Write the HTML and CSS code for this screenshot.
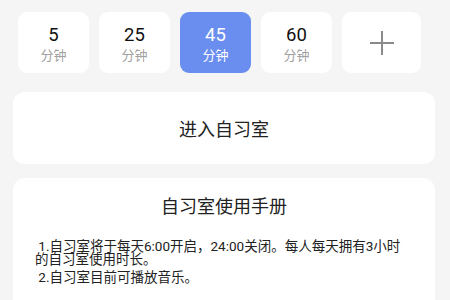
FILE: index.html
```html
<!DOCTYPE html>
<html lang="zh">
<head>
<meta charset="utf-8">
<link rel="stylesheet" href="styles.css">
</head>
<body>
<div class="page">
  <div class="times">
    <div class="time"><div class="num">5</div><div class="unit">分钟</div></div>
    <div class="time"><div class="num">25</div><div class="unit">分钟</div></div>
    <div class="time active"><div class="num">45</div><div class="unit">分钟</div></div>
    <div class="time"><div class="num">60</div><div class="unit">分钟</div></div>
    <div class="time add">
      <svg width="26" height="26" viewBox="0 0 26 26"><path d="M13 1V25M1 13H25" stroke="#8a8a8a" stroke-width="2"/></svg>
    </div>
  </div>
  <div class="card enter">进入自习室</div>
  <div class="card manual">
    <div class="title">自习室使用手册</div>
    <p class="para">&nbsp;1.自习室将于每天6:00开启，24:00关闭。每人每天拥有3小时的自习室使用时长。</p>
    <p class="para">&nbsp;2.自习室目前可播放音乐。</p>
  </div>
</div>
</body>
</html>
```
FILE: styles.css
```css
html, body {
  margin: 0;
  padding: 0;
  background: #f5f5f5;
  font-family: Roboto, "Noto Sans CJK SC", sans-serif;
  color: #111;
  overflow: hidden;
  height: 300px;
}
.page {
  padding: 12px 15px 0 13px;
}
.times {
  display: flex;
  gap: 10px;
  padding-left: 5px;
}
.time {
  width: 71px;
  height: 61px;
  box-sizing: border-box;
  padding-top: 3px;
  background: #fff;
  border-radius: 9px;
  display: flex;
  flex-direction: column;
  align-items: center;
  justify-content: center;
}
.time .num {
  font-size: 18.5px;
  line-height: 20px;
  color: #111;
}
.time .unit {
  font-size: 13px;
  line-height: 16px;
  color: #a0a0a0;
  margin-top: 3px;
}
.time.active {
  background: #6a8ef0;
}
.time.active .num,
.time.active .unit {
  color: #fff;
}
.time.add {
  width: 79px;
  padding-top: 0;
}
.card {
  background: #fff;
  border-radius: 12px;
  width: 422px;
}
.enter {
  margin-top: 19px;
  height: 72px;
  display: flex;
  align-items: center;
  justify-content: center;
  font-size: 18px;
  color: #222;
}
.manual {
  margin-top: 14px;
  padding: 17px 26px 20px 22px;
  box-sizing: border-box;
  height: 200px;
}
.title {
  text-align: center;
  font-size: 18px;
  line-height: 24px;
  color: #222;
  padding-left: 4px;
}
.para {
  margin: 21px 0 0;
  font-size: 13.5px;
  line-height: 13px;
  color: #222;
}
.para + .para {
  margin-top: 5px;
}
```
